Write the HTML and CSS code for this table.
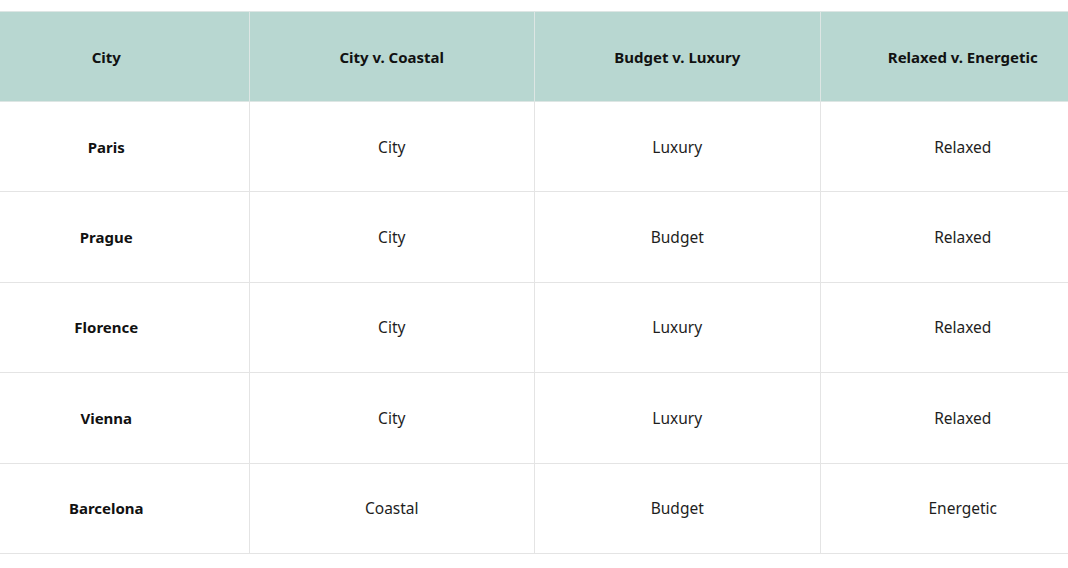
FILE: index.html
```html
<!DOCTYPE html>
<html>
<head>
<meta charset="utf-8">
<link rel="stylesheet" href="styles.css">
</head>
<body>
<div class="frame">
<table class="grid">
  <thead>
    <tr><th>City</th><th>City v. Coastal</th><th>Budget v. Luxury</th><th>Relaxed v. Energetic</th></tr>
  </thead>
  <tbody>
    <tr><td class="name">Paris</td><td>City</td><td>Luxury</td><td>Relaxed</td></tr>
    <tr><td class="name">Prague</td><td>City</td><td>Budget</td><td>Relaxed</td></tr>
    <tr><td class="name">Florence</td><td>City</td><td>Luxury</td><td>Relaxed</td></tr>
    <tr><td class="name">Vienna</td><td>City</td><td>Luxury</td><td>Relaxed</td></tr>
    <tr><td class="name">Barcelona</td><td>Coastal</td><td>Budget</td><td>Energetic</td></tr>
  </tbody>
</table>
</div>
</body>
</html>
```
FILE: styles.css
```css
html, body {
  margin: 0;
  padding: 0;
  background: #ffffff;
}
.frame {
  width: 1068px;
  height: 568px;
  overflow: hidden;
  padding-top: 11px;
  box-sizing: border-box;
}
.grid {
  margin-left: -37px;
  width: 1143px;
  table-layout: fixed;
  border-collapse: collapse;
  font-family: "Noto Sans", "Open Sans", sans-serif;
  font-size: 15px;
  color: #1e1e1e;
}
.grid th, .grid td {
  border: 1px solid #e4e4e4;
  text-align: center;
  vertical-align: middle;
  height: 89.4px;
  padding: 0;
}
.grid th {
  height: 89px;
  background: #b8d7d1;
  font-weight: 700;
  color: #111111;
  border-color: #dde6e4;
}
.grid td {
  font-weight: 400;
  font-size: 15.5px;
}
.grid td.name {
  font-weight: 700;
  font-size: 15px;
  color: #111111;
}
```
